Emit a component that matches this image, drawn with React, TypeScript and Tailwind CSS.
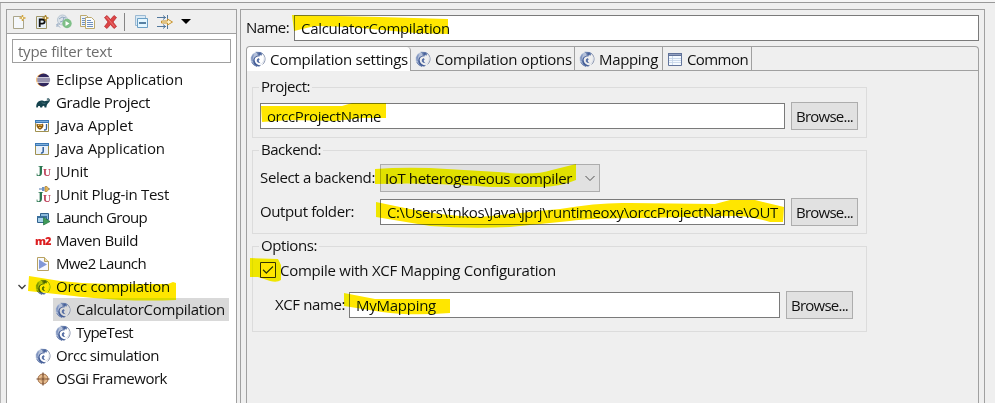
import { useLayoutEffect, useRef, type ReactNode } from "react";

/** A one-line label whose tracking is adjusted so that it fills `w` pixels. */
function Label({ w, children, className = "" }: { w: number; children: string; className?: string }) {
  const ref = useRef<HTMLSpanElement>(null);
  useLayoutEffect(() => {
    const el = ref.current;
    if (!el) return;
    el.style.letterSpacing = "0px";
    const natural = el.getBoundingClientRect().width;
    el.style.letterSpacing = `${(w - natural) / children.length}px`;
  }, [w, children]);
  return (
    <span ref={ref} className={`inline-block shrink-0 whitespace-pre align-top leading-5 ${className}`}>
      {children}
    </span>
  );
}

function Svg({ children, className = "" }: { children: ReactNode; className?: string }) {
  return (
    <svg viewBox="0 0 16 16" className={`size-4 shrink-0 ${className}`} fill="none">
      {children}
    </svg>
  );
}

const Orcc = () => (
  <Svg>
    <path d="M12.200 2.200c3.700 2.900 3.700 8.300.4 11.200" stroke="#7785a3" strokeWidth=".9" />
    <path d="M14 5.500c.8 3.300-.7 6.200-3.400 8" stroke="#dde2ec" strokeWidth="1" />
    <path d="M6 1L2.500 3 .7 6.500.8 10l2.400 3.800 3.600 1.700L5 12l-.8-3.500L5.500 5.500 7.500 4z" fill="#b3c0da" />
    <path d="M1.200 6.500l1.400-2.600 1.600-.9-.9 2.500-.6 2.700.5 2.500L1.500 9.500z" fill="#7f94bf" />
    <path d="M5.500.8l5.500.1 1.500 1.600-.6 2-1.800-.2-.9 1.400-1.500-.8-.6-2.100z" fill="#6f85b1" />
    <path d="M8.500 1.500l2.500.6-.7 2-1.800-.3z" fill="#48619a" />
    <path d="M8.600 5.300C5.800 5.700 4.200 7.500 4.700 9.800c.5 2.500 2.700 4.500 6.300 4.700l-1.800 1C5.500 15.700 3 13 3.200 9.600 3.300 7.200 5.300 5.100 7.600 4.600z" fill="#465f98" />
    <path d="M8.700 7L7 8.300l-.3 1.900 1.400 1.600 2.500.4-1.400-1.100-.5-1.500 1-1.100z" fill="#5971a6" />
    <path d="M1.800 11.200l1.800 2.500 3.400 1.800" stroke="#6178aa" strokeWidth="1" />
  </Svg>
);
const Eclipse = () => (
  <Svg>
    <circle cx="7.700" cy="8" r="6.500" fill="#f5a43b" />
    <circle cx="8.600" cy="8" r="6.500" fill="#30265c" />
    <path d="M2 5.900h13M1.800 8h13.600M2 10.100h13" stroke="#fff" strokeWidth="1.100" />
  </Svg>
);
const Gradle = () => (
  <Svg>
    <path d="M1.300 12.500c-.2-3.500 1.100-6.300 4.200-6.800 2.300-.4 3.200.8 4.900.4.900-.2 1.300-.8 2.400-.6.800.1 1.200-.6.700-1-.5-.3-1 .1-1.200.3l-.7-.9c.8-.9 2.300-.9 2.900 0 .9 1.300 0 3-1.300 4.200-1.200 1.200-1.700 2.700-1.800 4.400H9.600l-.5-1.700-1.400.1-.6 1.600H5.300l-.5-1.500-1.500.1-.6 1.400z" fill="#15434e" />
    <path d="M6.600 7.300c1 .9 2.300 1.300 3.800.9" stroke="#6c9197" strokeWidth=".6" />
  </Svg>
);
const JavaWindow = ({ applet = false }: { applet?: boolean }) => (
  <Svg>
    <path d="M.5 2.500h13v11H.5z" fill={applet ? "#fff" : "#e9f1fb"} stroke="#a0914f" />
    <path d="M0 2h14v3H0z" fill="#3a78b5" />
    <path d="M1 3.500h12" stroke="#8fbce4" strokeWidth=".8" />
    {applet ? (
      <>
        <path d="M1.500 5.500l1.500.8h3.500L8 5.500l.5 2.600-1 2L5.800 11.500H4.200L2.500 10.100l-1-2z" fill="#8c5c13" />
        <path d="M3 7.500h1.300M5.500 7.500h1.300M4 9.500h1.800" stroke="#ffcc54" />
        <path d="M11.500 6v4.300c0 1.300-.9 1.900-2.500 1.600" stroke="#315f99" strokeWidth="1.300" />
      </>
    ) : (
      <path d="M8.200 6v4.300c0 1.400-.9 1.900-2.300 1.600" stroke="#315f99" strokeWidth="1.500" />
    )}
  </Svg>
);
const JUnit = ({ plug = false }: { plug?: boolean }) => (
  <span className="relative block size-4 shrink-0 font-['Liberation_Serif',serif] font-bold leading-4">
    <span className={`absolute left-[1px] text-[15px] text-[#2b7751] ${plug ? "top-[2px]" : "top-[-1px]"}`}>J</span>
    <span className={`absolute left-[8px] text-[11px] text-[#bd3f59] ${plug ? "top-[3px]" : "top-0"}`}>U</span>
    {plug && (
      <svg viewBox="0 0 16 6" className="absolute -top-px left-0 h-1.5 w-4">
        <path d="M4 3h4M12 3h3" stroke="#4c73aa" />
        <path d="M7 1h2.500v4H7z" fill="#6d92c4" />
        <path d="M10 .5h2l2 2.500-2 2.500h-2z" fill="#e3b457" stroke="#a17422" strokeWidth=".6" />
      </svg>
    )}
  </span>
);
const LaunchGroup = () => (
  <Svg>
    <path d="M5.500 3.500h8v6h-8z" fill="#8cb9dc" stroke="#31618d" />
    <path d="M2.500 6.500h9v6h-9z" fill="#a7d0ea" stroke="#31618d" />
    <path d="M2 6h10v2H2z" fill="#396f9d" />
    <path d="M8.500 7.500l6.500 4L8.500 15z" fill="#3f9a59" stroke="#23743f" strokeWidth=".7" />
  </Svg>
);
const Maven = () => (
  <span className="block size-4 shrink-0 font-['Open_Sans',sans-serif] text-[11px] font-extrabold leading-4 tracking-[-1px] text-[#dc1e20]">
    m2
  </span>
);
const Mwe = () => (
  <Svg>
    <path d="M2.500 1.500h7l4 4v9h-11z" fill="#f7f9ff" stroke="#b8a262" />
    <path d="M9.500 1.500v4h4" fill="#efe2ae" stroke="#b8a262" />
    <path d="M4 3.500l8 5L4 13z" fill="#8298d7" />
  </Svg>
);
const Osgi = () => (
  <Svg>
    <circle cx="8" cy="8" r="5" fill="#e9c093" stroke="#a37048" />
    <path d="M8 1.500v13M1.500 8h13" stroke="#764a2e" strokeWidth="1.200" />
    <circle cx="8" cy="8" r="2.300" stroke="#bd8b5c" strokeWidth=".7" />
  </Svg>
);
const Table = () => (
  <Svg>
    <path d="M1.500 2.500h13v12h-13z" fill="#f5faff" stroke="#63759c" />
    <path d="M1 2h14v3H1z" fill="#607299" />
    <path d="M2 3.500h12" stroke="#a9b6d2" strokeWidth=".7" />
    <path d="M5.500 5v9M2 7.500h12M2 9.500h12M2 11.500h12" stroke="#c1d2e7" strokeWidth=".8" />
  </Svg>
);

function Toolbar() {
  return (
    <div className="flex h-6 items-center border-b border-[#a0a0a0] bg-[#efefef] pl-[5px]">
      <Svg>
        <path d="M1.500 2.500h8l2 3v9h-10z" fill="#f5f8fc" stroke="#aaa58a" />
        <path d="M10.500 1v6M7.500 4h6" stroke="#d3a640" strokeWidth="1.500" />
        <path d="M10.500 3v2" stroke="#fff5c7" />
      </Svg>
      <Svg className="ml-[7px]">
        <path d="M1.500 2.500h10v12h-10z" fill="#e7f0f8" stroke="#9d9364" />
        <path d="M4.700 13V5.500h2.500c3.300 0 3.300 4.200 0 4.200H5" stroke="#111" strokeWidth="1.800" />
        <path d="M10.500 1v6M7.500 4h6" stroke="#b38629" strokeWidth="1.500" />
        <path d="M10.500 3v2" stroke="#fff5c7" />
      </Svg>
      <Svg className="ml-[5px]">
        <circle cx="6.500" cy="6" r="5" fill="#dce3e9" stroke="#b8c5d2" />
        <path d="M3 5l3-2 4 1M4 8l3-1 1-4M1 10.500l3 3M1 13v-3h3" stroke="#95aac2" />
        <circle cx="11" cy="9.500" r="4.700" fill="#7ebf87" />
        <path d="M9.500 7l4 2.500-4 2.500z" fill="#fff" />
      </Svg>
      <Svg className="ml-[8px]">
        <path d="M.5 1.500h6l3 3v8h-9z" fill="#eef4fb" stroke="#bda96d" />
        <path d="M5.500 3.500h6l3 3v8h-9z" fill="#f9fcff" stroke="#bda96d" />
        <path d="M2 4.500h3M2 6.500h3M2 8.500h3M2 10.500h3M7 6.500h4M7 8.500h6M7 10.500h6M7 12.500h6" stroke="#7191bd" />
      </Svg>
      <Svg className="ml-[7px]">
        <path d="M1.500 3.500L4 1.500l3.500 4 3.500-4 2.500 2-3.500 4.500 3.500 4.500-2.500 2-3.500-4-3.500 4-2.500-2L5 8z" fill="#dc4546" stroke="#b52328" strokeWidth=".7" />
        <path d="M3.500 3l8 9.500" stroke="#ef817d" strokeWidth=".8" />
      </Svg>
      <span className="ml-[5px] h-[18px] w-px shrink-0 bg-[#858585]" />
      <Svg className="ml-[9px]">
        <path d="M1.500 1.500h10v10h-10z" fill="#d9e9f5" stroke="#9ab9d2" />
        <path d="M3.500 4.500h10v9h-10z" fill="#e4f6ff" stroke="#6b9fc5" />
        <path d="M5 9h7" stroke="#275a86" strokeWidth="1.500" />
      </Svg>
      <Svg className="ml-[7px]">
        <path d="M0 3.500h9M0 12.500h9M10.500 1v4M10.500 11v4M6 1.500l2.500 2L6 5.500M6 10.500l2.500 2L6 14.500" stroke="#52789d" />
        <path d="M4.500 7h6V5l5 3-5 3V9h-6z" fill="#fff3cc" stroke="#c79331" />
      </Svg>
      <span className="ml-[8px] h-0 w-0 border-x-[5px] border-t-[5px] border-x-transparent border-t-black" />
    </div>
  );
}

const before = [
  { icon: <Eclipse />, text: "Eclipse Application", w: 127 },
  { icon: <Gradle />, text: "Gradle Project", w: 94 },
  { icon: <JavaWindow applet />, text: "Java Applet", w: 77 },
  { icon: <JavaWindow />, text: "Java Application", w: 109 },
  { icon: <JUnit />, text: "JUnit", w: 32 },
  { icon: <JUnit plug />, text: "JUnit Plug-in Test", w: 113 },
  { icon: <LaunchGroup />, text: "Launch Group", w: 91 },
  { icon: <Maven />, text: "Maven Build", w: 82 },
  { icon: <Mwe />, text: "Mwe2 Launch", w: 90 },
];

function Row({ icon, text, w, className = "pl-[28px]" }: { icon: ReactNode; text: string; w: number; className?: string }) {
  return (
    <div className={`flex h-[23px] items-center gap-[5px] ${className}`}>
      {icon}
      <Label w={w} className="-mt-px">{text}</Label>
    </div>
  );
}

function Sidebar() {
  return (
    <aside className="flex w-[231px] shrink-0 flex-col border border-b-0 border-[#a0a0a0] bg-white">
      <Toolbar />
      <div className="mx-[5px] mt-[5px] flex h-6 shrink-0 items-center border border-[#a0a0a0] pl-[5px] text-[#6d6d6d]">
        <Label w={94}>type filter text</Label>
      </div>
      <div className="pt-[5px]">
        {before.map((r) => (
          <Row key={r.text} {...r} />
        ))}
        <div className="flex h-[23px] items-center pl-[10px]">
          <svg viewBox="0 0 10 10" className="mr-[8px] size-[10px]" fill="none">
            <path d="M1.500 3L5 6.500 8.500 3" stroke="#404040" strokeWidth="1.400" />
          </svg>
          <Row icon={<Orcc />} text="Orcc compilation" w={114} className="" />
        </div>
        <div className="ml-[46px] w-[176px] bg-[#d9d9d9]">
          <Row icon={<Orcc />} text="CalculatorCompilation" w={149} className="pl-[2px]" />
        </div>
        <Row icon={<Orcc />} text="TypeTest" w={57} className="pl-[48px]" />
        <Row icon={<Orcc />} text="Orcc simulation" w={103} />
        <Row icon={<Osgi />} text="OSGi Framework" w={111} />
      </div>
    </aside>
  );
}

function Input({ className, w, children }: { className: string; w: number; children: string }) {
  return (
    <div className={`flex h-[26px] shrink-0 items-center border border-[#7a7a7a] bg-white pl-[6px] ${className}`}>
      <Label w={w}>{children}</Label>
    </div>
  );
}

function Browse() {
  return (
    <button className="ml-[6px] flex h-7 w-[67px] shrink-0 items-center justify-center border border-[#adadad] bg-[#e1e1e1]">
      <Label w={57}>Browse...</Label>
    </button>
  );
}

function Group({ title, w, className, children }: { title: string; w: number; className: string; children: ReactNode }) {
  return (
    <fieldset className={`w-[615px] min-w-0 border border-[#dcdcdc] ${className}`}>
      <legend className="ml-[6px] h-5 px-[2px] leading-5">
        <Label w={w} className="-mt-px">{title}</Label>
      </legend>
      {children}
    </fieldset>
  );
}

const tabs = [
  { text: "Compilation options", w: 137, icon: <Orcc />, width: "w-[164px]" },
  { text: "Mapping", w: 59, icon: <Orcc />, width: "w-[88px]" },
  { text: "Common", w: 61, icon: <Table />, width: "w-[89px]" },
];

function Settings() {
  return (
    <main className="ml-[3px] w-[745px] shrink-0 border border-b-0 border-[#a0a0a0] px-[5px] pt-[5px]">
      <div className="flex h-[26px] items-center">
        <div className="w-[48px] shrink-0">
          <Label w={43}>Name:</Label>
        </div>
        <Input className="w-[685px]" w={149}>CalculatorCompilation</Input>
      </div>
      <div className="mt-[5px] h-[357px] w-[733px] rounded-t border border-b-0 border-[#a0a0a0]">
        <div className="flex h-6">
          <div className="flex w-[164px] shrink-0 items-center gap-1 rounded-t border-r border-[#a0a0a0] bg-white pl-[3px]">
            <Orcc />
            <Label w={138}>Compilation settings</Label>
          </div>
          <div className="flex flex-1 border-b border-[#a0a0a0]">
            {tabs.map((t) => (
              <div key={t.text} className={`flex shrink-0 items-center gap-1 border-r border-[#a0a0a0] pl-1 ${t.width}`}>
                {t.icon}
                <Label w={t.w}>{t.text}</Label>
              </div>
            ))}
          </div>
        </div>
        <div className="pl-[5px] pt-[6px]">
          <Group title="Project:" w={49} className="h-[61px]">
            <div className="ml-[7px] mt-[5px] flex items-center">
              <Input className="w-[525px]" w={114}>orccProjectName</Input>
              <Browse />
            </div>
          </Group>
          <Group title="Backend:" w={60} className="mt-[2px] h-[94px]">
            <div className="ml-[7px] mt-[4px] flex items-center">
              <div className="w-[120px] shrink-0">
                <Label w={115}>Select a backend:</Label>
              </div>
              <div className="flex h-7 w-[220px] items-center justify-between border border-[#adadad] bg-[#e1e1e1] pl-[4px] pr-[4px]">
                <Label w={187}>IoT heterogeneous compiler</Label>
                <svg viewBox="0 0 10 10" className="size-[10px]" fill="none">
                  <path d="M.5 3L5 7.500 9.500 3" stroke="#505050" />
                </svg>
              </div>
            </div>
            <div className="ml-[7px] mt-[6px] flex items-center">
              <div className="w-[120px] shrink-0">
                <Label w={94}>Output folder:</Label>
              </div>
              <Input className="w-[405px]" w={391}>{"C:\\Users\\tnkos\\Java\\jprj\\runtimeoxy\\orccProjectName\\OUT"}</Input>
              <Browse />
            </div>
          </Group>
          <Group title="Options:" w={56} className="mt-[2px] h-[96px]">
            <div className="ml-[7px] mt-[2px] flex h-6 items-center gap-[4px]">
              <svg viewBox="0 0 16 16" className="size-4 shrink-0" fill="none">
                <path d="M.5.5h15v15H.5z" fill="#fff" stroke="#333" />
                <path d="M3 7.700l3.300 3.300L13 4.500" stroke="#333" strokeWidth="1.300" />
              </svg>
              <Label w={276}>Compile with XCF Mapping Configuration</Label>
            </div>
            <div className="ml-[22px] mt-[9px] flex items-center">
              <div className="w-[74px] shrink-0">
                <Label w={70}>XCF name:</Label>
              </div>
              <Input className="w-[431px]" w={80}>MyMapping</Input>
              <Browse />
            </div>
          </Group>
        </div>
      </div>
    </main>
  );
}

/** Marker strokes laid over the fields. */
function Highlights() {
  return (
    <svg viewBox="0 0 995 403" className="pointer-events-none absolute inset-0 h-[403px] w-[995px] mix-blend-darken" fill="#ffe600">
      <path d="M292 15L380 17 448 19 448 34 415 33 350 27 315 26 294 31z" />
      <path d="M261 106L342 106 352 103 386 103 386 118 362 118 335 121 290 120 262 122z" />
      <path d="M375 169Q400 167 430 168L498 172Q535 176 552 170L576 164 576 180Q560 187 540 187L490 187Q430 182 375 184z" />
      <path d="M376 202L400 207Q440 216 480 217Q530 212 560 209Q600 202 630 203L715 204 730 200 755 200 784 207 783 222 770 222Q750 216 735 216L640 218Q590 218 570 221L510 227Q470 229 430 226L376 217z" />
      <path d="M250 258L278 259 281 265 281 280Q277 283 270 281L258 277 250 277z" />
      <path d="M344 293L375 299 450 299 450 313Q410 316 382 312L344 306z" />
      <path d="M29 276L60 281Q85 284 110 284L168 284 173 282 176 283 176 300Q150 301 120 300Q80 297 65 295L28 291z" />
    </svg>
  );
}

export default function App() {
  return (
    <div className="relative isolate flex h-[403px] w-[995px] flex-col overflow-hidden bg-[#efefef] font-['Open_Sans','Noto_Sans',sans-serif] text-[15px] text-[#111]">
      <div className="h-[3px] shrink-0 border-b border-[#999] bg-[#f5f5f5]" />
      <div className="flex flex-1 border-l border-[#b5b5b5] pl-[5px] pt-[6px]">
        <Sidebar />
        <Settings />
      </div>
      <Highlights />
    </div>
  );
}
